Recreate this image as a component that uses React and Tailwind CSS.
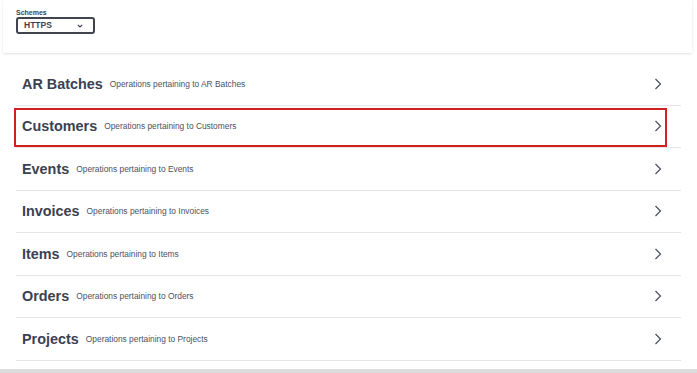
import React from 'react';

const tags = [
  { name: 'AR Batches', desc: 'Operations pertaining to AR Batches' },
  { name: 'Customers', desc: 'Operations pertaining to Customers', marked: true },
  { name: 'Events', desc: 'Operations pertaining to Events' },
  { name: 'Invoices', desc: 'Operations pertaining to Invoices' },
  { name: 'Items', desc: 'Operations pertaining to Items' },
  { name: 'Orders', desc: 'Operations pertaining to Orders' },
  { name: 'Projects', desc: 'Operations pertaining to Projects' },
];

function Chevron() {
  return (
    <svg width="8" height="12" viewBox="0 0 8 12" className="shrink-0">
      <path d="M1.5 1 L6.5 6 L1.5 11" fill="none" stroke="#4a4f5c" strokeWidth="1.2" />
    </svg>
  );
}

function TagRow({ tag }) {
  return (
    <div className="relative flex items-center h-[42.5px] border-b border-[#e4e5e7] pl-[6px] pr-[19px]">
      <h3 className="text-[14.4px] font-bold text-[#3b4151] leading-none">{tag.name}</h3>
      <span className="ml-[7px] text-[8.4px] text-[#4b5161] leading-none">{tag.desc}</span>
      <div className="flex-1" />
      <Chevron />
      {/* highlight annotation */}
      {tag.marked && (
        <div className="absolute left-[-2px] right-[14px] top-[2.5px] bottom-[0.5px] border-2 border-[#d21f1f]" />
      )}
    </div>
  );
}

export default function App() {
  return (
    <div className="w-[697px] h-[373px] overflow-hidden bg-white font-['Liberation_Sans',Arial,sans-serif]">
      {/* Schemes */}
      <div className="ml-[3px] w-[689px] h-[53px] bg-white shadow-[0_1px_2px_0_rgba(0,0,0,0.12)] pl-[13px] pt-[9px]">
        <div className="text-[7px] font-bold text-[#3b4151] leading-none">Schemes</div>
        <div className="mt-[1px] flex items-center justify-between w-[79px] h-[17px] border-2 border-[#41444e] rounded-[3px] pl-[6px] pr-[10px]">
          <span className="text-[8.5px] font-bold text-[#3b4151] leading-none">HTTPS</span>
          <svg width="6" height="4" viewBox="0 0 6 4">
            <path d="M0.8 0.8 L3 3 L5.2 0.8" fill="none" stroke="#3b4151" strokeWidth="1.2" />
          </svg>
        </div>
      </div>

      {/* Tags */}
      <div className="mt-[10px] ml-[16px] w-[665px]">
        {tags.map((t) => (
          <TagRow key={t.name} tag={t} />
        ))}
      </div>

      <div className="mt-[8px] h-[6px] bg-[#dcdcdc]" />
    </div>
  );
}
